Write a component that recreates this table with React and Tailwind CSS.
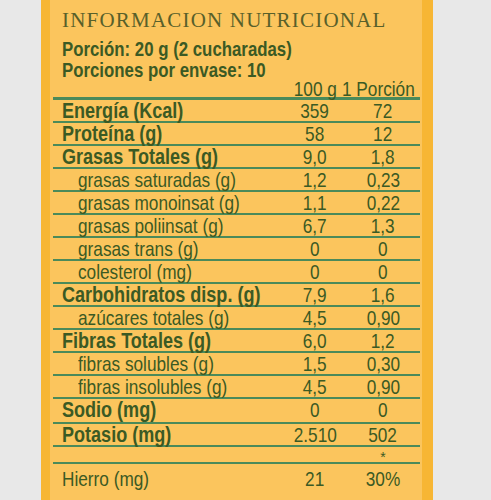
import React from "react"

const rows = [
  { label: "Energía (Kcal)", a: "359", b: "72", bold: true },
  { label: "Proteína (g)", a: "58", b: "12", bold: true },
  { label: "Grasas Totales (g)", a: "9,0", b: "1,8", bold: true },
  { label: "grasas saturadas (g)", a: "1,2", b: "0,23" },
  { label: "grasas monoinsat (g)", a: "1,1", b: "0,22" },
  { label: "grasas poliinsat (g)", a: "6,7", b: "1,3" },
  { label: "grasas trans (g)", a: "0", b: "0" },
  { label: "colesterol (mg)", a: "0", b: "0" },
  { label: "Carbohidratos disp. (g)", a: "7,9", b: "1,6", bold: true },
  { label: "azúcares totales (g)", a: "4,5", b: "0,90" },
  { label: "Fibras Totales (g)", a: "6,0", b: "1,2", bold: true },
  { label: "fibras solubles (g)", a: "1,5", b: "0,30" },
  { label: "fibras insolubles (g)", a: "4,5", b: "0,90" },
  { label: "Sodio (mg)", a: "0", b: "0", bold: true, tall: true },
  { label: "Potasio (mg)", a: "2.510", b: "502", bold: true },
]

// no narrow font installed, so the condensed label face is squeezed by hand
const Narrow = ({ children, left }) => (
  <span className={"inline-block whitespace-nowrap scale-x-[0.82] " + (left ? "origin-left" : "origin-center")}>
    {children}
  </span>
)

function Row({ row, first }) {
  return (
    <div
      className={
        "grid grid-cols-[minmax(0,1fr)_62px_74px] border-[#4b8a5a] text-[21px] leading-[21px] " +
        (first ? "border-t-[3px] h-[24px]" : row.tall ? "border-t-2 h-[25px]" : "border-t-2 h-[23px]")
      }
    >
      <div className={row.bold ? "pl-[9px] text-[22px] font-bold" : "pl-[25px]"}>
        <Narrow left>{row.label}</Narrow>
      </div>
      <div className="flex justify-center">
        <Narrow>{row.a}</Narrow>
      </div>
      <div className="flex justify-center">
        <Narrow>{row.b}</Narrow>
      </div>
    </div>
  )
}

export default function App() {
  return (
    <div className="h-[500px] w-full overflow-hidden bg-[#e8e8e8]">
      <div className="ml-[41px] h-full w-[392px] bg-[#f7b634] pl-[9px] pr-[11px]">
        <div className="h-full bg-[#fbc55d] pt-[8px] text-[#3b5a24] font-['Liberation_Sans',sans-serif]">
          <h1 className="pl-[12px] text-[21px] leading-[24px] tracking-[1.2px] text-[#58602a] font-['Liberation_Serif',serif]">
            INFORMACION NUTRICIONAL
          </h1>
          <div className="mt-[6px] pl-[12px] text-[20.5px] font-bold leading-[21px]">
            <p><Narrow left>Porción: 20 g (2 cucharadas)</Narrow></p>
            <p><Narrow left>Porciones por envase: 10</Narrow></p>
          </div>
          <div className="ml-[3px] mr-[2px]">
            <div className="grid h-[17px] grid-cols-[minmax(0,1fr)_62px_74px] text-[21px] leading-[17px]">
              <span />
              <div className="flex justify-center">
                <Narrow>100 g</Narrow>
              </div>
              <div className="flex justify-center pr-[10px]">
                <Narrow>1 Porción</Narrow>
              </div>
            </div>
            {rows.map((row, i) => (
              <Row key={row.label} row={row} first={i === 0} />
            ))}
            <div className="grid h-[17px] grid-cols-[minmax(0,1fr)_62px_74px] border-t-2 border-[#4b8a5a] text-[14px] leading-[17px]">
              <span />
              <span />
              <span className="pt-[2px] text-center">*</span>
            </div>
            <div className="grid grid-cols-[minmax(0,1fr)_62px_74px] border-t-2 border-[#4b8a5a] pt-[4px] text-[21px] leading-[21px]">
              <div className="pl-[9px]">
                <Narrow left>Hierro (mg)</Narrow>
              </div>
              <div className="flex justify-center">
                <Narrow>21</Narrow>
              </div>
              <div className="flex justify-center">
                <Narrow>30%</Narrow>
              </div>
            </div>
          </div>
        </div>
      </div>
    </div>
  )
}
